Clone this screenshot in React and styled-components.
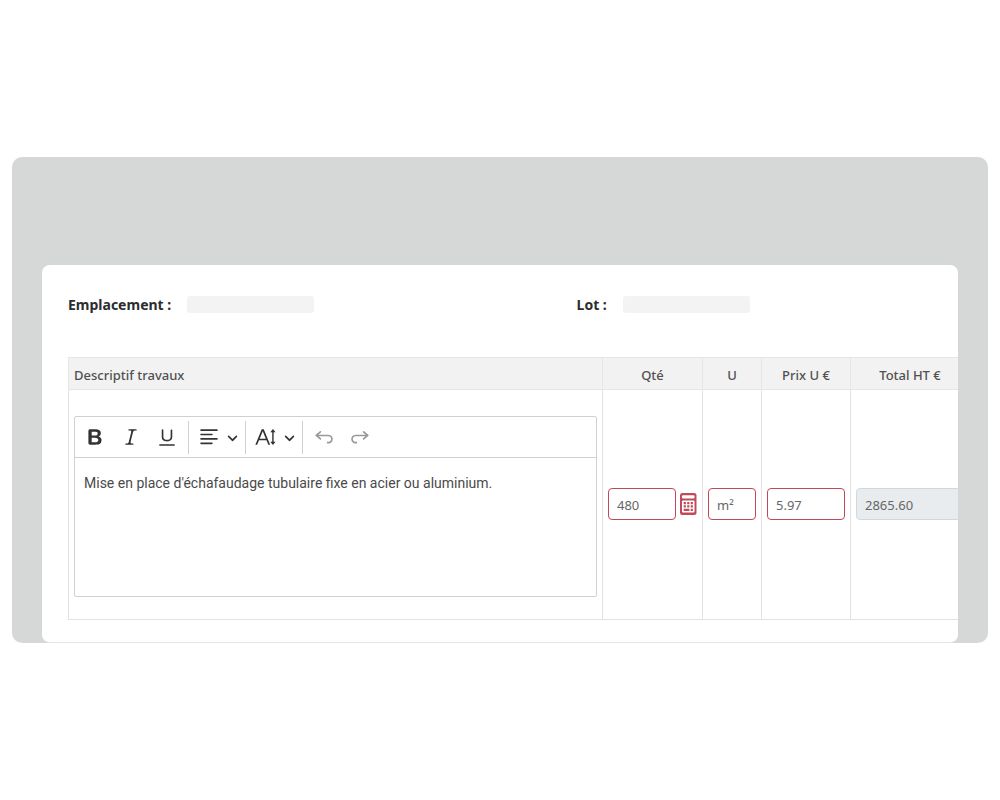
import React from 'react'
import styled, { createGlobalStyle, css } from 'styled-components'

const GlobalStyle = createGlobalStyle`
  *, *::before, *::after {
    box-sizing: border-box;
  }

  body {
    margin: 0;
    background: #fff;
    color: #4a4a4a;
    font-family: 'Noto Sans', 'Open Sans', sans-serif;
    font-size: 13px;
  }
`

const Page = styled.main`
  display: flex;
  align-items: center;
  min-height: 100vh;
  padding: 12px;
`

const Stage = styled.section`
  flex: 1;
  min-width: 0;
  padding: 108px 30px 0;
  overflow: hidden;
  background: #d6d8d7;
  border-radius: 10px;
`

const Panel = styled.div`
  padding: 30px 0 22px 26px;
  overflow: hidden;
  background: #fff;
  border-bottom: 1px solid #e6e8e7;
  border-radius: 8px;
`

const Fields = styled.dl`
  display: grid;
  grid-template-columns: 4fr 3fr;
  margin: 0 0 42px;
`

const Field = styled.div`
  display: flex;
  align-items: flex-start;
  gap: 16px;
`

const FieldName = styled.dt`
  color: #2b2d2f;
  font-size: 14px;
  font-weight: 700;
  line-height: 20px;
`

const FieldValue = styled.dd`
  width: 127px;
  height: 17px;
  margin: 1px 0 0;
  background: #f3f3f3;
  border-radius: 3px;
`

// the last column runs under the right edge of the panel
const Table = styled.table`
  width: calc(100% + 11px);
  table-layout: fixed;
  border-collapse: separate;
  border-spacing: 0;
`

const HeaderCell = styled.th`
  width: ${({ $width }) => ($width ? `${$width}px` : 'auto')};
  height: 33px;
  padding: 2px 5px 0;
  background: #f2f2f2;
  border: 1px solid #e6e6e6;
  border-right: 0;
  color: #505050;
  font-weight: 500;
  line-height: 20px;
  text-align: ${({ $align }) => $align || 'center'};
`

const Cell = styled.td`
  padding: 0 5px 2px;
  border-bottom: 1px solid #e2e2e2;
  border-left: 1px solid #e2e2e2;
  vertical-align: middle;
`

const EditorCell = styled(Cell)`
  padding: 26px 5px 22px;
`

const Editor = styled.div`
  display: flex;
  flex-direction: column;
  height: 181px;
  border: 1px solid #d0d0d0;
  border-radius: 2px;
`

const Toolbar = styled.div`
  display: flex;
  align-items: center;
  height: 41px;
  padding: 0 2px;
  border-bottom: 1px solid #d0d0d0;
`

const ToolButton = styled.button`
  display: flex;
  align-items: center;
  justify-content: center;
  gap: 7px;
  width: ${({ $wide }) => ($wide ? 56 : 36)}px;
  height: 32px;
  padding: 0;
  padding-left: ${({ $wide }) => ($wide ? 2 : 0)}px;
  background: none;
  border: 0;
  color: #333;

  &:disabled {
    color: #999;
  }
`

const Separator = styled.span`
  width: 1px;
  height: 33px;
  margin-left: ${({ $gap }) => ($gap ? 3 : 0)}px;
  margin-right: ${({ $end }) => ($end ? 3 : 0)}px;
  background: #d0d0d0;
`

const Icon = styled.svg`
  width: 22px;
  height: 22px;
  fill: currentColor;
`

const Chevron = styled.svg`
  width: 11px;
  height: 11px;
  fill: currentColor;
`

const EditorText = styled.textarea`
  flex: 1;
  padding: 15px 9px;
  background: none;
  border: 0;
  outline: 0;
  resize: none;
  color: #4a4a4a;
  font-family: Roboto, sans-serif;
  font-size: 14px;
  line-height: 20px;
`

const Input = styled.input`
  display: block;
  flex: 1;
  width: 100%;
  min-width: 0;
  height: 32px;
  padding: 2px 8px 0;
  background: #fff;
  border: 1px solid #c04a5a;
  border-radius: 4px;
  color: #666;
  font: inherit;

  ${({ readOnly }) =>
    readOnly &&
    css`
      background: #e9ecef;
      border-color: #d3d7db;
    `}
`

const Quantity = styled.div`
  display: flex;
  align-items: center;
  gap: 4px;
`

const CalcButton = styled.button`
  display: flex;
  padding: 0;
  background: none;
  border: 0;
  color: #c04a5a;
`

const CalcIcon = styled.svg`
  width: 17px;
  height: 22px;
`

const icons = {
  bold:
    'M10.187 17H5.773c-.637 0-1.092-.138-1.364-.415-.273-.277-.409-.718-.409-1.323V4.738c0-.617.14-1.062.419-1.332.279-.27.73-.406 1.354-.406h4.68c.69 0 1.288.041 1.793.124.506.083.96.242 1.36.478.341.197.644.447.906.75a3.262 3.262 0 0 1 .808 2.162c0 1.401-.722 2.426-2.167 3.075C15.05 10.175 16 11.315 16 13.01a3.756 3.756 0 0 1-2.296 3.504 6.1 6.1 0 0 1-1.517.377c-.571.073-1.238.11-2 .11zm-.217-6.217H7v4.087h3.069c1.977 0 2.965-.69 2.965-2.072 0-.707-.256-1.22-.768-1.537-.512-.319-1.277-.478-2.296-.478zM7 5.13v3.619h2.606c.729 0 1.292-.067 1.69-.2a1.6 1.6 0 0 0 .91-.765c.165-.267.247-.566.247-.897 0-.707-.26-1.176-.778-1.409-.519-.232-1.31-.348-2.375-.348H7z',
  italic:
    'm9.586 14.633.021.004c-.036.335.095.655.393.962.082.083.173.15.274.201h1.474a.6.6 0 1 1 0 1.2H5.304a.6.6 0 0 1 0-1.2h1.15c.474-.07.809-.182 1.005-.334.157-.122.291-.32.404-.597l2.416-9.55a1.053 1.053 0 0 0-.281-.823 1.12 1.12 0 0 0-.442-.296H8.15a.6.6 0 0 1 0-1.2h6.443a.6.6 0 1 1 0 1.2h-1.195c-.376.056-.65.155-.823.296-.215.175-.423.439-.623.79l-2.366 9.347z',
  underline:
    'M3 18v-1.5h14V18zm2.2-8V3.6c0-.4.4-.6.8-.6.3 0 .7.2.7.6v6.2c0 2 1.3 2.8 3.2 2.8 1.9 0 3.4-.9 3.4-2.9V3.6c0-.3.4-.5.8-.5.3 0 .7.2.7.5V10c0 2.7-2.2 4-4.9 4-2.6 0-4.7-1.2-4.7-4z',
  align:
    'M2 3.75c0 .414.336.75.75.75h14.5a.75.75 0 1 0 0-1.5H2.75a.75.75 0 0 0-.75.75zm0 8c0 .414.336.75.75.75h14.5a.75.75 0 1 0 0-1.5H2.75a.75.75 0 0 0-.75.75zm0 4c0 .414.336.75.75.75h9.929a.75.75 0 1 0 0-1.5H2.75a.75.75 0 0 0-.75.75zm0-8c0 .414.336.75.75.75h9.929a.75.75 0 1 0 0-1.5H2.75a.75.75 0 0 0-.75.75z',
  fontSize:
    'M9.816 11.5 7.038 4.785 4.261 11.5h5.555Zm.62 1.5H3.641l-1.666 4.028H.312l5.789-14h1.875l5.789 14h-1.663L10.436 13ZM16.3 2.8l2.4 2.9h-1.75v8.6h1.75l-2.4 2.9-2.4-2.9h1.75V5.7H13.9z',
  undo:
    'm5.042 9.367 2.189 1.837a.75.75 0 0 1-.965 1.149l-3.788-3.18a.747.747 0 0 1-.21-.284.75.75 0 0 1 .17-.945L6.23 4.762a.75.75 0 1 1 .964 1.15L4.863 7.866h8.917A.75.75 0 0 1 14 7.9a4 4 0 1 1-1.477 7.718l.344-1.489a2.5 2.5 0 1 0 1.094-4.73l.008-.032H5.042z',
  redo:
    'm14.958 9.367-2.189 1.837a.75.75 0 0 0 .965 1.149l3.788-3.18a.747.747 0 0 0 .21-.284.75.75 0 0 0-.17-.945L13.77 4.762a.75.75 0 1 0-.964 1.15l2.331 1.955H6.22A.75.75 0 0 0 6 7.9a4 4 0 1 0 1.477 7.718l-.344-1.489A2.5 2.5 0 1 1 6.039 9.4l-.008-.032h8.927z',
}

const Tool = ({ icon, label, hasMenu, disabled }) => (
  <ToolButton
    type="button"
    aria-label={label}
    $wide={hasMenu}
    disabled={disabled}
  >
    <Icon viewBox="0 0 20 20">
      <path d={icons[icon]} />
    </Icon>
    {hasMenu ? (
      <Chevron viewBox="0 0 10 10">
        <path d="M.941 4.523a.75.75 0 1 1 1.06-1.06l3.006 3.005 3.005-3.005a.75.75 0 1 1 1.06 1.06l-3.549 3.55a.75.75 0 0 1-1.168-.136L.941 4.523z" />
      </Chevron>
    ) : null}
  </ToolButton>
)

const Calculator = () => (
  <CalcIcon viewBox="0 0 17 22">
    <rect width="16.5" height="22" rx="2.5" fill="currentColor" />
    <rect x="2" y="2.2" width="12.5" height="3.2" rx="1" fill="#fff" />
    <rect x="2" y="7.6" width="12.5" height="11.8" rx="1" fill="#fff" />
    <path
      d="M3.7 9h2.2v2.2H3.7zM7.2 9h2.2v2.2H7.2zM10.7 9h2.2v2.2h-2.2zM3.7 12.3h2.2v2.2H3.7zM7.2 12.3h2.2v2.2H7.2zM10.7 12.3h2.2v2.2h-2.2zM3.7 15.8h5.7V18H3.7zM10.7 15.8h2.2V18h-2.2z"
      fill="currentColor"
    />
  </CalcIcon>
)

const columns = [
  { label: 'Descriptif travaux', align: 'left' },
  { label: 'Qté', width: 100 },
  { label: 'U', width: 59 },
  { label: 'Prix U €', width: 89 },
  { label: 'Total HT €', width: 119 },
]

const App = () => (
  <>
    <GlobalStyle />
    <Page>
      <Stage>
        <Panel>
          <Fields>
            <Field>
              <FieldName>Emplacement :</FieldName>
              <FieldValue />
            </Field>
            <Field>
              <FieldName>Lot :</FieldName>
              <FieldValue />
            </Field>
          </Fields>
          <Table>
            <thead>
              <tr>
                {columns.map(({ label, width, align }) => (
                  <HeaderCell
                    key={label}
                    scope="col"
                    $width={width}
                    $align={align}
                  >
                    {label}
                  </HeaderCell>
                ))}
              </tr>
            </thead>
            <tbody>
              <tr>
                <EditorCell>
                  <Editor>
                    <Toolbar role="toolbar">
                      <Tool icon="bold" label="Gras" />
                      <Tool icon="italic" label="Italique" />
                      <Tool icon="underline" label="Souligné" />
                      <Separator $gap />
                      <Tool icon="align" label="Alignement" hasMenu />
                      <Separator />
                      <Tool icon="fontSize" label="Taille" hasMenu />
                      <Separator $end />
                      <Tool icon="undo" label="Annuler" disabled />
                      <Tool icon="redo" label="Rétablir" disabled />
                    </Toolbar>
                    <EditorText
                      aria-label="Descriptif travaux"
                      spellCheck={false}
                      defaultValue="Mise en place d'échafaudage tubulaire fixe en acier ou aluminium."
                    />
                  </Editor>
                </EditorCell>
                <Cell>
                  <Quantity>
                    <Input aria-label="Qté" defaultValue="480" />
                    <CalcButton type="button" aria-label="Calculer">
                      <Calculator />
                    </CalcButton>
                  </Quantity>
                </Cell>
                <Cell>
                  <Input aria-label="U" defaultValue="m²" />
                </Cell>
                <Cell>
                  <Input aria-label="Prix U €" defaultValue="5.97" />
                </Cell>
                <Cell>
                  <Input aria-label="Total HT €" defaultValue="2865.60" readOnly />
                </Cell>
              </tr>
            </tbody>
          </Table>
        </Panel>
      </Stage>
    </Page>
  </>
)

export default App
